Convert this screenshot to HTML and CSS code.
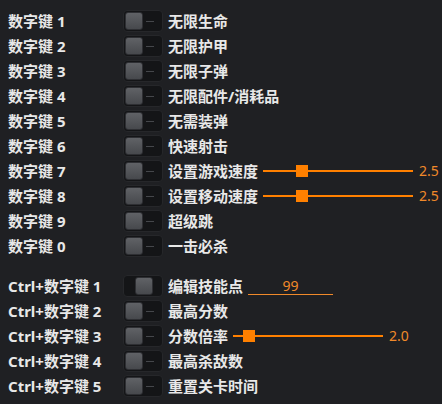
FILE: index.html
```html
<!DOCTYPE html>
<html lang="zh-CN">
<head>
<meta charset="utf-8">
<link rel="stylesheet" href="styles.css">
</head>
<body>
<div class="panel">
  <div class="group">
    <div class="row"><span class="key">数字键 1</span><span class="tg"><span class="knob"></span><span class="dash"></span></span><span class="name">无限生命</span></div>
    <div class="row"><span class="key">数字键 2</span><span class="tg"><span class="knob"></span><span class="dash"></span></span><span class="name">无限护甲</span></div>
    <div class="row"><span class="key">数字键 3</span><span class="tg"><span class="knob"></span><span class="dash"></span></span><span class="name">无限子弹</span></div>
    <div class="row"><span class="key">数字键 4</span><span class="tg"><span class="knob"></span><span class="dash"></span></span><span class="name">无限配件/消耗品</span></div>
    <div class="row"><span class="key">数字键 5</span><span class="tg"><span class="knob"></span><span class="dash"></span></span><span class="name">无需装弹</span></div>
    <div class="row"><span class="key">数字键 6</span><span class="tg"><span class="knob"></span><span class="dash"></span></span><span class="name">快速射击</span></div>
    <div class="row"><span class="key">数字键 7</span><span class="tg"><span class="knob"></span><span class="dash"></span></span><span class="name">设置游戏速度</span>
      <span class="slider"><span class="line"></span><span class="thumb" style="left:33px"></span></span><span class="val">2.5</span></div>
    <div class="row"><span class="key">数字键 8</span><span class="tg"><span class="knob"></span><span class="dash"></span></span><span class="name">设置移动速度</span>
      <span class="slider"><span class="line"></span><span class="thumb" style="left:33px"></span></span><span class="val">2.5</span></div>
    <div class="row"><span class="key">数字键 9</span><span class="tg"><span class="knob"></span><span class="dash"></span></span><span class="name">超级跳</span></div>
    <div class="row"><span class="key">数字键 0</span><span class="tg"><span class="knob"></span><span class="dash"></span></span><span class="name">一击必杀</span></div>
  </div>
  <div class="group">
    <div class="row"><span class="key">Ctrl+数字键 1</span><span class="tg on"><span class="knob"></span></span><span class="name">编辑技能点</span>
      <span class="field">99</span></div>
    <div class="row"><span class="key">Ctrl+数字键 2</span><span class="tg"><span class="knob"></span><span class="dash"></span></span><span class="name">最高分数</span></div>
    <div class="row"><span class="key">Ctrl+数字键 3</span><span class="tg"><span class="knob"></span><span class="dash"></span></span><span class="name">分数倍率</span>
      <span class="slider"><span class="line"></span><span class="thumb" style="left:10px"></span></span><span class="val">2.0</span></div>
    <div class="row"><span class="key">Ctrl+数字键 4</span><span class="tg"><span class="knob"></span><span class="dash"></span></span><span class="name">最高杀敌数</span></div>
    <div class="row"><span class="key">Ctrl+数字键 5</span><span class="tg"><span class="knob"></span><span class="dash"></span></span><span class="name">重置关卡时间</span></div>
  </div>
</div>
</body>
</html>
```
FILE: styles.css
```css
html, body {
  margin: 0;
  padding: 0;
  background: #1f2023;
}
body {
  width: 442px;
  height: 404px;
  overflow: hidden;
  font-family: "Noto Sans", "Noto Sans CJK SC", sans-serif;
  color: #e8e8e8;
}
.panel {
  padding: 8px 0 0 8px;
  display: flex;
  flex-direction: column;
  gap: 15px;
}
.group {
  display: flex;
  flex-direction: column;
}
.row {
  height: 25px;
  display: flex;
  align-items: center;
}
.key {
  width: 115px;
  font-size: 15px;
  font-weight: 700;
  white-space: nowrap;
}
.name {
  margin-left: 5px;
  font-size: 15px;
  font-weight: 700;
  white-space: nowrap;
}
.tg {
  position: relative;
  width: 40px;
  height: 22px;
  box-sizing: border-box;
  border-radius: 4px;
  background: #141517;
  border: 1px solid #26272a;
  display: flex;
  align-items: center;
}
.knob {
  width: 18px;
  height: 18px;
  box-sizing: border-box;
  margin-left: 1px;
  border-radius: 3px;
  background: linear-gradient(#606266, #47494d);
  border: 1px solid #2e2f33;
}
.tg.on .knob {
  margin-left: 11px;
}
.dash {
  position: absolute;
  left: 22px;
  top: 10px;
  width: 8px;
  height: 1px;
  background: #45474b;
}
.slider {
  position: relative;
  margin-left: 5px;
  width: 150px;
  height: 12px;
  display: block;
}
.line {
  position: absolute;
  left: 0;
  right: 0;
  top: 5px;
  height: 2px;
  background: #ff8000;
}
.thumb {
  position: absolute;
  top: 0;
  width: 12px;
  height: 12px;
  background: #ff8000;
}
.val {
  margin-left: 6px;
  font-size: 14px;
  color: #f0892a;
}
.field {
  margin-left: 5px;
  width: 85px;
  height: 16px;
  margin-top: 3px;
  box-sizing: border-box;
  border-bottom: 1px solid #f0892a;
  color: #f0892a;
  font-size: 14px;
  text-align: center;
  line-height: 13px;
}
```
